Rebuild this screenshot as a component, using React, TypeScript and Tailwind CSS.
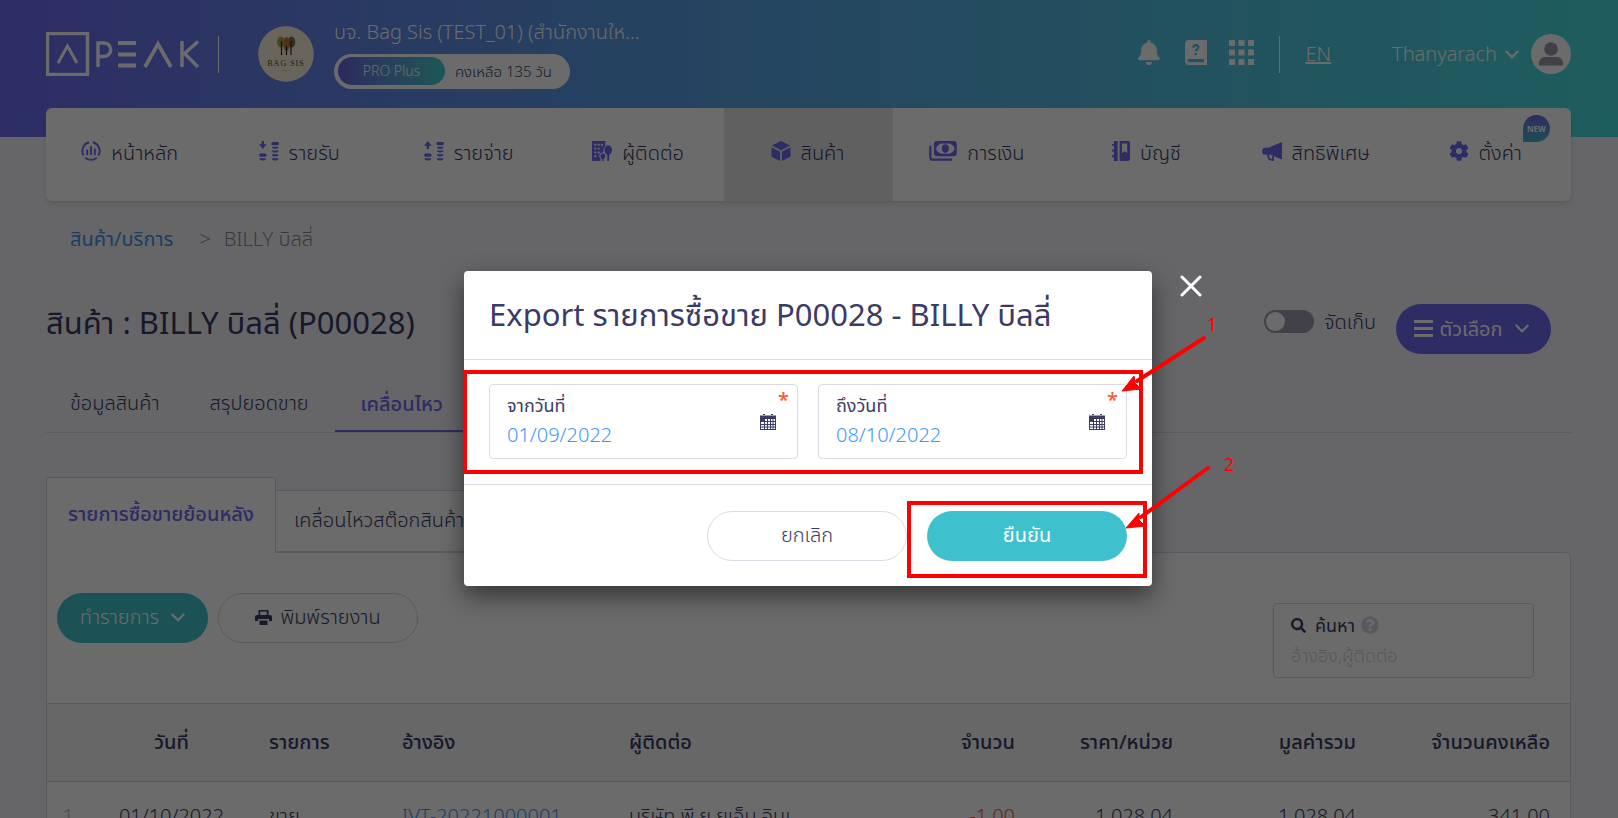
import { useState } from 'react'
import type { ReactNode } from 'react'
import { FaBell, FaCog, FaQuestionCircle, FaSearch } from 'react-icons/fa'

const ChevronIcon = () => (
  <svg viewBox="0 0 14 9" className="h-[9px] w-[14px]" fill="none" stroke="currentColor" strokeWidth="2.2" strokeLinecap="round">
    <path d="M1.400 1.600 7 7.200l5.600-5.600" />
  </svg>
)

const HomeIcon = () => (
  <svg viewBox="0 0 21 21" className="h-5 w-5" fill="none" stroke="currentColor" strokeWidth="2">
    <path d="M12.500 1.300a9.400 9.400 0 0 1 5.700 14M2.800 15.300a9.400 9.400 0 0 1 5.700-14M4.500 17.700a9.400 9.400 0 0 0 12 0" />
    <path d="M6.500 9v6M10.500 5.500V15M14.500 8v7" />
  </svg>
)

const CoinsIcon = ({ up = false }: { up?: boolean }) => (
  <svg viewBox="0 0 21 21" className="h-5 w-5" fill="currentColor">
    {up ? (
      <path d="M4 0 8 5H5.200v3.500H2.800V5H0z" />
    ) : (
      <path d="M2.800 0h2.400v3.500H8L4 8.500 0 3.500h2.800z" />
    )}
    <rect x="0" y="13" width="8" height="3.500" rx="1.700" />
    <path d="M0.500 18h7q0 2.500-2.500 2.500h-2q-2.500 0-2.500-2.500z" />
    <rect x="13" y="1" width="8" height="3.400" rx="1.700" />
    <path d="M13.500 6h7q0 2.200-2.500 2.200h-2q-2.500 0-2.500-2.200zM13.500 10h7q0 2.200-2.500 2.200h-2q-2.500 0-2.500-2.200zM13.500 14h7q0 2.200-2.500 2.200h-2q-2.500 0-2.500-2.200zM13.500 18h7q0 2.500-2.500 2.500h-2q-2.500 0-2.500-2.500z" />
  </svg>
)

const ContactIcon = () => (
  <svg viewBox="0 0 21 21" className="h-5 w-5" fill="currentColor">
    <path
      fillRule="evenodd"
      d="M0 0h14v5.500a5 5 0 0 0-2 4.500l-1 2.500a3 3 0 0 0-3 4.500l1 1v3H0zM2.500 3v2h2V3zM6 3v2h2V3zM9.500 3v2h2V3zM2.500 7v2h2V7zM6 7v2h2V7zM2.500 11v2h2v-2zM6 11v2h2v-2zM2.500 15v2h2v-2z"
    />
    <ellipse cx="17" cy="9.500" rx="4" ry="5" />
    <path d="M16 12h2v9h-2z" />
    <ellipse cx="11.500" cy="16" rx="2.500" ry="2.800" />
    <path d="M10.700 17h1.600v4h-1.600z" />
  </svg>
)

const BoxIcon = () => (
  <svg viewBox="0 0 21 21" className="h-5 w-5" fill="currentColor">
    <path d="M10.500 0 20 4.800 10.500 9.800 1 4.800zM0.500 6.500l9 4.800V21l-9-4.500zM20.500 6.500l-9 4.800V21l9-4.500z" />
  </svg>
)

const MoneyIcon = () => (
  <svg viewBox="0 0 29 21" className="h-5 w-7" fill="none" stroke="currentColor">
    <rect x="6.300" y="1.300" width="21.400" height="13.400" rx="2" strokeWidth="2.600" />
    <path d="M1.200 5v12a2.600 2.600 0 0 0 2.600 2.600H24" strokeWidth="2.400" />
    <ellipse cx="17" cy="8" rx="3.600" ry="4.600" fill="currentColor" stroke="none" />
    <path d="M7 2h5.500L7 6.500zM27 2h-5.500L27 6.500zM7 14h5.500L7 9.500zM27 14h-5.500L27 9.500z" fill="currentColor" stroke="none" />
  </svg>
)

const LedgerIcon = () => (
  <svg viewBox="0 0 19 21" className="h-5 w-[18px]" fill="currentColor">
    <path d="M2 0h4v21H2v-4H0v-2h2v-4H0V9h2V5H0V3h2z" />
    <path fillRule="evenodd" d="M8 0h9a2 2 0 0 1 2 2v17a2 2 0 0 1-2 2H8zM10.500 2.500V13l2.700-2.400L16 13V2.500z" />
  </svg>
)

const HornIcon = () => (
  <svg viewBox="0 0 21 21" className="h-5 w-5" fill="currentColor">
    <path d="M21 1v18.500L8.500 14.500h-5Q0 14.500 0 10.800T3.500 7H7z" />
    <path d="M6 14.500 7.500 19l4 1.200V16" fill="none" stroke="currentColor" strokeWidth="2" />
  </svg>
)

const HelpBookIcon = () => (
  <svg viewBox="0 0 22 25" className="h-[25px] w-[22px]">
    <path
      fill="currentColor"
      fillRule="evenodd"
      d="M4 0h18v25H4a4 4 0 0 1-4-4V4a4 4 0 0 1 4-4zM4 19a1.600 1.600 0 0 0 0 3.200h15V19z"
    />
    <path d="M8.300 7.600c.4-3.400 5.600-3 5 0-.3 1.600-2.400 1.500-2.400 3.600M10.900 13v2.300" fill="none" stroke="#4fc0dc" strokeWidth="2.200" />
  </svg>
)

const AppsIcon = () => (
  <svg viewBox="0 0 25 25" className="h-[25px] w-[25px]" fill="currentColor">
    <path d="M0 0h6v6H0zM9.500 0h6v6h-6zM19 0h6v6h-6zM0 9.500h6v6H0zM9.500 9.500h6v6h-6zM19 9.500h6v6h-6zM0 19h6v6H0zM9.500 19h6v6h-6zM19 19h6v6h-6z" />
  </svg>
)

const UserIcon = () => (
  <svg viewBox="0 0 40 40" className="h-10 w-10 rounded-full bg-white" fill="#9a98ad">
    <circle cx="20" cy="15" r="6.800" />
    <path d="M8 31.500v-2.500a6 6 0 0 1 6-6h12a6 6 0 0 1 6 6v2.500z" />
  </svg>
)

const PrinterIcon = () => (
  <svg viewBox="0 0 17 16" className="h-4 w-[17px]" fill="currentColor">
    <path fillRule="evenodd" d="M3.500 1h10v5H15a2 2 0 0 1 2 2v4h-3v-2H3v2H0V8a2 2 0 0 1 2-2h1.500zM5.200 2.500V6h6.600V2.500zM4.500 11.500h8V16h-8z" />
  </svg>
)

const CalendarIcon = () => (
  <svg viewBox="0 0 16 16" className="h-4 w-4" fill="#3b3b66">
    <path
      fillRule="evenodd"
      d="M3 0h2v1H3zM11 0h2v1h-2zM0 1.500h16V16H0zM5 5v2h2V5zM8 5v2h2V5zM11 5v2h1.500V5zM13.500 5v2H15V5zM1 8v2h3V8zM5 8v2h2V8zM8 8v2h2V8zM11 8v2h1.500V8zM13.500 8v2H15V8zM1 11v1.500h3V11zM5 11v1.500h2V11zM8 11v1.500h2V11zM11 11v1.500h1.500V11zM13.500 11v1.500H15V11zM1 13.500V15h3v-1.500zM5 13.500V15h2v-1.500zM8 13.500V15h2v-1.500zM11 13.500V15h1.500v-1.500zM13.500 13.500V15H15v-1.500z"
    />
  </svg>
)

const PeakLogo = () => (
  <svg viewBox="0 0 154 44" className="h-11 w-[154px]" fill="none" stroke="#fff" aria-label="PEAK">
    <rect x="1.500" y="1.500" width="40" height="41" strokeWidth="3.400" />
    <path d="M12 31 21.500 14 31 31" strokeWidth="3" />
    <path d="M52 35V11h6a6.500 6.500 0 0 1 0 13.500h-6" strokeWidth="3.400" />
    <path d="M72 11h18M72 22.500h18M72 33.500h18" strokeWidth="4" />
    <path d="M99 35 112 12l13 23" strokeWidth="3.800" />
    <path d="M136 9v26M152 9.500 138.500 21.500 152 35" strokeWidth="3.400" />
  </svg>
)

const ShopLogo = () => (
  <svg viewBox="0 0 56 56" className="h-14 w-14 shrink-0 rounded-full">
    <circle cx="28" cy="28" r="28" fill="#f8f0de" />
    <ellipse cx="23" cy="16" rx="4" ry="5.500" fill="#a3a850" />
    <ellipse cx="33.500" cy="16" rx="3.800" ry="5.500" fill="#7a7440" />
    <ellipse cx="28.500" cy="18" rx="3" ry="7" fill="#cf7433" />
    <path d="M23.500 15v14M28.500 20v9M33 15v14" stroke="#3a2412" strokeWidth="1.200" />
    <text x="28" y="40" textAnchor="middle" fontFamily="Liberation Serif, serif" fontSize="8" letterSpacing="1" fill="#54483c">
      BAG SIS
    </text>
    <path d="M23 44.500h10" stroke="#e6d6b4" />
  </svg>
)

const menus: { label: string; icon: ReactNode; active?: boolean; isNew?: boolean }[] = [
  { label: 'หน้าหลัก', icon: <HomeIcon /> },
  { label: 'รายรับ', icon: <CoinsIcon /> },
  { label: 'รายจ่าย', icon: <CoinsIcon up /> },
  { label: 'ผู้ติดต่อ', icon: <ContactIcon /> },
  { label: 'สินค้า', icon: <BoxIcon />, active: true },
  { label: 'การเงิน', icon: <MoneyIcon /> },
  { label: 'บัญชี', icon: <LedgerIcon /> },
  { label: 'สิทธิพิเศษ', icon: <HornIcon /> },
  { label: 'ตั้งค่า', icon: <FaCog className="h-5 w-5" />, isNew: true },
]

function DateField({ id, label, value, onChange }: { id: string; label: string; value: string; onChange: (v: string) => void }) {
  return (
    <div className="relative flex h-[75px] flex-1 items-center rounded border border-[#dcdae8] pr-[21px] pl-[17px]">
      <div className="min-w-0 flex-1 pt-[3px]">
        <label htmlFor={id} className="block text-lg leading-6 font-normal text-[#3b3b66]">
          {label}
        </label>
        <input
          id={id}
          value={value}
          onChange={(e) => onChange(e.target.value)}
          className="block w-full bg-transparent text-xl leading-9 font-light text-[#3f97fb] outline-none"
        />
      </div>
      <CalendarIcon />
      <span className="absolute top-[3px] right-2 text-xl leading-6 font-medium text-[#fb5a35]">*</span>
    </div>
  )
}

export default function App() {
  const [fromDate, setFromDate] = useState('01/09/2022')
  const [toDate, setToDate] = useState('08/10/2022')
  const [archived, setArchived] = useState(false)
  const [keyword, setKeyword] = useState('')

  return (
    <div className="relative h-screen overflow-hidden bg-[#f3f3fa] font-['Noto_Sans','Noto_Sans_Thai',sans-serif] text-xl font-light text-[#3b3b66]">
      {/* Header */}
      <header className="h-[137px] bg-linear-to-r from-[#6e6bf2] via-[#5b99e6] via-35% to-[#48dede] pr-[47px] pl-[46px] text-white">
        <div className="flex h-[108px] items-center">
          <PeakLogo />
          <span className="ml-[18px] h-[37px] w-px bg-white" />
          <div className="ml-[39px]">
            <ShopLogo />
          </div>
          <div className="ml-5 flex flex-col pb-1">
            <span className="leading-8">บจ. Bag Sis (TEST_01) (สำนักงานให...</span>
            <span className="mt-[6px] flex h-[35px] w-[236px] items-center rounded-full bg-white p-1 text-[15px] text-[#3b3b66]">
              <span className="flex h-7 w-[107px] items-center justify-center rounded-full bg-linear-to-r from-[#6a63e0] to-[#3fd0cb] text-sm text-white">
                PRO Plus
              </span>
              <span className="ml-[10px]">คงเหลือ 135 วัน</span>
            </span>
          </div>
          <div className="ml-auto flex items-center">
            <div className="flex items-center pb-1">
              <button aria-label="แจ้งเตือน">
                <FaBell className="h-[25px] w-[22px]" />
              </button>
              <button aria-label="คู่มือ" className="ml-[25px]">
                <HelpBookIcon />
              </button>
              <button aria-label="แอป" className="ml-[22px]">
                <AppsIcon />
              </button>
            </div>
            <span className="ml-[25px] h-[37px] w-px bg-white" />
            <a href="#en" className="ml-[25px] underline">
              EN
            </a>
            <button className="ml-[61px] flex items-center">
              Thanyarach
              <span className="mr-3 ml-2">
                <ChevronIcon />
              </span>
              <UserIcon />
            </button>
          </div>
        </div>
      </header>

      {/* Main menu */}
      <nav className="relative -mt-[29px] mr-[47px] ml-[46px] grid h-[93px] grid-cols-9 overflow-hidden rounded-md bg-white shadow-md">
        {menus.map((m) => (
          <a
            key={m.label}
            href={`#${m.label}`}
            className={`relative flex items-center justify-center gap-[10px] pr-[2px] pb-1 ${m.active ? 'bg-[#e4e4e4]' : ''}`}
          >
            <span className="pb-1 text-[#6c69ee]">{m.icon}</span>
            <span>{m.label}</span>
            {m.isNew && (
              <span className="absolute top-[7px] right-[21px] flex h-[27px] w-[27px] items-center justify-center rounded-full rounded-bl-none bg-linear-to-b from-[#6a68e4] to-[#45b5cb] text-[8px] font-bold text-white">
                NEW
              </span>
            )}
          </a>
        ))}
      </nav>

      <main className="pr-[47px] pl-[46px]">
        <div className="mt-5 flex h-9 items-center px-6">
          <a href="#products" className="font-normal text-[#3c96e4]">
            สินค้า/บริการ
          </a>
          <span className="ml-[26px] text-[#88879c]">&gt;</span>
          <span className="ml-[13px] text-[#88879c]">BILLY บิลลี่</span>
        </div>

        <div className="mt-9 flex h-[60px] items-center">
          <h1 className="text-[31px] font-normal">สินค้า : BILLY บิลลี่ (P00028)</h1>
          <div className="mr-5 ml-auto flex items-start pt-[11px]">
            <label className="flex items-center gap-[10px] pt-1">
              <input
                type="checkbox"
                checked={archived}
                onChange={() => setArchived(!archived)}
                className="h-[23px] w-[50px] appearance-none rounded-full bg-[#9e9cb0] before:m-[2px] before:block before:h-[19px] before:w-[19px] before:rounded-full before:bg-white"
              />
              จัดเก็บ
            </label>
            <button className="ml-5 flex h-[50px] w-[155px] items-center justify-center rounded-full bg-[#6c69ee] font-normal text-white">
              <svg viewBox="0 0 19 17" className="mr-[6px] h-[17px] w-[19px]" stroke="currentColor" strokeWidth="3">
                <path d="M0 1.500h19M0 8.500h19M0 15.500h19" />
              </svg>
              ตัวเลือก
              <span className="mr-1 ml-3">
                <ChevronIcon />
              </span>
            </button>
          </div>
        </div>

        <div className="mt-[19px] flex h-[61px] border-b border-[#d9d9e4]">
          <a href="#info" className="flex items-center px-6 pt-[2px]">
            ข้อมูลสินค้า
          </a>
          <a href="#sales" className="flex items-center px-[26px] pt-[2px]">
            สรุปยอดขาย
          </a>
          <a href="#movement" className="flex items-center border-b-2 border-[#6c69ee] px-[26px] pt-[5px] font-medium text-[#6c69ee]">
            เคลื่อนไหว
          </a>
        </div>

        <div className="mt-11 flex h-[75px] items-end">
          <a
            href="#history"
            className="z-10 -mb-px flex h-[76px] w-[230px] items-center justify-center rounded-t border border-b-0 border-[#d6d5e2] bg-white pb-[3px] font-medium text-[#6c69ee]"
          >
            รายการซื้อขายย้อนหลัง
          </a>
          <a href="#stock" className="flex h-[62px] items-center border-y border-r border-[#d6d5e2] bg-white px-[18px] pb-[3px]">
            เคลื่อนไหวสต๊อกสินค้า
          </a>
        </div>

        <section className="rounded-tr-md border border-[#d6d5e2] bg-white">
          <div className="flex h-[150px] items-start pt-10 pr-[36px] pl-[10px]">
            <button className="flex h-[50px] w-[151px] items-center justify-center rounded-full bg-[#3fc3ca] pb-[2px] text-white">
              ทำรายการ
              <span className="ml-3">
                <ChevronIcon />
              </span>
            </button>
            <button className="ml-[10px] flex h-[50px] w-[200px] items-center justify-center rounded-full border border-[#d6d5e2] pb-[2px]">
              <span className="mr-2">
                <PrinterIcon />
              </span>
              พิมพ์รายงาน
            </button>
            <div className="mt-[10px] ml-auto h-[75px] w-[261px] rounded border border-[#d6d5e2] px-[17px] pt-[7px]">
              <label htmlFor="search" className="flex items-center text-lg leading-7 font-normal">
                <FaSearch className="mr-[9px] h-[15px] w-[15px]" />
                ค้นหา
                <FaQuestionCircle className="ml-[6px] h-[18px] w-[18px] text-[#d6d5e2]" />
              </label>
              <input
                id="search"
                value={keyword}
                onChange={(e) => setKeyword(e.target.value)}
                placeholder="อ้างอิง,ผู้ติดต่อ"
                className="block w-full text-lg leading-8 font-light outline-none placeholder:text-[#d0cfdc]"
              />
            </div>
          </div>

          <table className="w-full table-fixed whitespace-nowrap">
            <thead>
              <tr className="h-[78px] border-y border-[#d6d5e2] bg-[#f5f5f5] text-left [&>th]:px-[10px] [&>th]:pb-[2px] [&>th]:font-medium">
                <th className="w-[37px]" />
                <th className="w-[175px] text-center">วันที่</th>
                <th className="w-[133px]">รายการ</th>
                <th className="w-[227px]">อ้างอิง</th>
                <th>ผู้ติดต่อ</th>
                <th className="w-[124px] text-right">จำนวน</th>
                <th className="w-[158px] text-right">ราคา/หน่วย</th>
                <th className="w-[183px] text-right">มูลค่ารวม</th>
                <th className="w-[204px] pr-5! text-right">จำนวนคงเหลือ</th>
              </tr>
            </thead>
            <tbody>
              <tr className="h-[68px] [&>td]:px-[10px]">
                <td className="text-right text-[#b5b4c4]">1</td>
                <td className="text-center">01/10/2022</td>
                <td>ขาย</td>
                <td>
                  <a href="#ivt" className="text-[#3f97fb]">
                    IVT-20221000001
                  </a>
                </td>
                <td>บริษัท พี.ยู.ยูเอ็น.อินเ</td>
                <td className="text-right text-[#f05a3c]">-1.00</td>
                <td className="text-right">1,028.04</td>
                <td className="text-right">1,028.04</td>
                <td className="pr-5! text-right">341.00</td>
              </tr>
            </tbody>
          </table>
        </section>
      </main>

      {/* Export dialog */}
      <div className="absolute inset-0 z-20 flex items-start justify-center bg-black/58 pt-[271px] pr-[2px]">
        <div role="dialog" aria-labelledby="export-title" className="relative w-[688px] rounded bg-white shadow-[0_10px_24px_rgba(0,0,0,0.5)]">
          <h2 id="export-title" className="flex h-[89px] items-center border-b border-[#dcdae8] px-[25px] text-[31px] font-normal">
            Export รายการซื้อขาย P00028 - BILLY บิลลี่
          </h2>
          <div className="flex gap-5 border-b border-[#dcdae8] px-[25px] pt-6 pb-[25px]">
            <DateField id="from-date" label="จากวันที่" value={fromDate} onChange={setFromDate} />
            <DateField id="to-date" label="ถึงวันที่" value={toDate} onChange={setToDate} />
          </div>
          <div className="flex justify-end gap-5 px-[25px] pt-[26px] pb-[25px]">
            <button className="h-[50px] w-[200px] rounded-full border border-[#dcdae8] pb-[2px]">ยกเลิก</button>
            <button className="h-[50px] w-[200px] rounded-full bg-[#3fc0cd] pb-[2px] font-normal text-white">ยืนยัน</button>
          </div>

          <button aria-label="ปิด" className="absolute top-1 -right-[50px] text-white">
            <svg viewBox="0 0 22 22" className="h-[22px] w-[22px]" stroke="currentColor" strokeWidth="3" strokeLinecap="round">
              <path d="M2 2l18 18M20 2 2 20" />
            </svg>
          </button>

          {/* Step markers */}
          <div className="pointer-events-none absolute top-[99px] right-[9px] -left-[1px] h-[104px] border-4 border-[#ff0000]" />
          <div className="pointer-events-none absolute top-[230px] right-[5px] h-[77px] w-[240px] border-4 border-[#ff0000]" />
          <svg viewBox="0 0 100 220" className="pointer-events-none absolute top-[61px] -right-[65px] h-[220px] w-[100px]" fill="#ff0000" stroke="#ff0000">
            <path d="M87 6 20 49" strokeWidth="4" strokeLinecap="round" />
            <path d="M5 59 17 44 18 51 24 57z" strokeWidth="1" />
            <path d="M91 136 24 185" strokeWidth="4" strokeLinecap="round" />
            <path d="M9 196 22 181 22 188 28 194z" strokeWidth="1" />
          </svg>
          <span className="absolute top-[39px] -right-[65px] text-lg font-normal text-[#ff0000]">1</span>
          <span className="absolute top-[179px] -right-[82px] text-lg font-normal text-[#ff0000]">2</span>
        </div>
      </div>
    </div>
  )
}
